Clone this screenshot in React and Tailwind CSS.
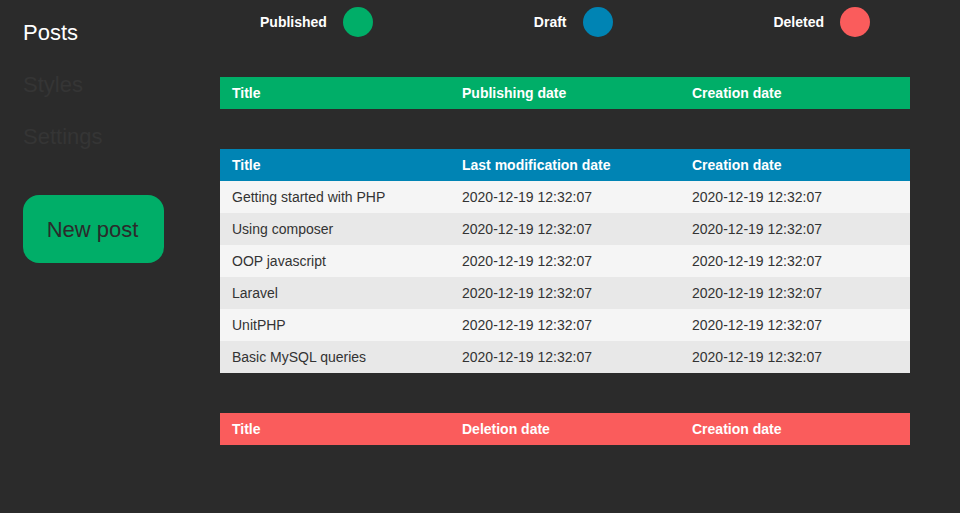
const posts = [
  "Getting started with PHP",
  "Using composer",
  "OOP javascript",
  "Laravel",
  "UnitPHP",
  "Basic MySQL queries",
];

const DATE = "2020-12-19 12:32:07";

function HeaderRow({ color, cols }) {
  return (
    <div className={`grid h-8 grid-cols-3 items-center text-sm font-bold text-white ${color}`}>
      {cols.map((c) => (
        <div key={c} className="px-3">
          {c}
        </div>
      ))}
    </div>
  );
}

function Legend({ label, color }) {
  return (
    <div className="flex items-center gap-4">
      <span className="text-sm font-bold text-white">{label}</span>
      <span className={`h-[30px] w-[30px] rounded-full ${color}`} />
    </div>
  );
}

export default function App() {
  return (
    <div
      className="flex h-[513px] w-[960px] bg-[#2b2b2b]"
      style={{ fontFamily: '"Liberation Sans", Arial, sans-serif' }}
    >
      <aside className="w-[220px] shrink-0 pl-[23px] pt-5">
        <nav className="flex flex-col gap-[26px] text-[22px] leading-[26px]">
          <a className="text-white">Posts</a>
          <a className="text-[#353535]">Styles</a>
          <a className="text-[#353535]">Settings</a>
        </nav>
        <button className="mt-[45px] h-[68px] w-[141px] rounded-2xl bg-[#00ae68] pr-[2px] text-[22px] text-[#2b2b2b]">
          New post
        </button>
      </aside>

      <main className="w-[690px] pt-[7px]">
        <div className="flex justify-between px-10">
          <Legend label="Published" color="bg-[#00ae68]" />
          <Legend label="Draft" color="bg-[#0084b4]" />
          <Legend label="Deleted" color="bg-[#fa5c5c]" />
        </div>

        <div className="mt-10">
          <HeaderRow
            color="bg-[#00ae68]"
            cols={["Title", "Publishing date", "Creation date"]}
          />
        </div>

        <div className="mt-10">
          <HeaderRow
            color="bg-[#0084b4]"
            cols={["Title", "Last modification date", "Creation date"]}
          />
          {posts.map((p, i) => (
            <div
              key={p}
              className={`grid h-8 grid-cols-3 items-center text-sm text-[#333] ${
                i % 2 === 0 ? "bg-[#f5f5f5]" : "bg-[#e8e8e8]"
              }`}
            >
              <div className="px-3">{p}</div>
              <div className="px-3">{DATE}</div>
              <div className="px-3">{DATE}</div>
            </div>
          ))}
        </div>

        <div className="mt-10">
          <HeaderRow
            color="bg-[#fa5c5c]"
            cols={["Title", "Deletion date", "Creation date"]}
          />
        </div>
      </main>
    </div>
  );
}
